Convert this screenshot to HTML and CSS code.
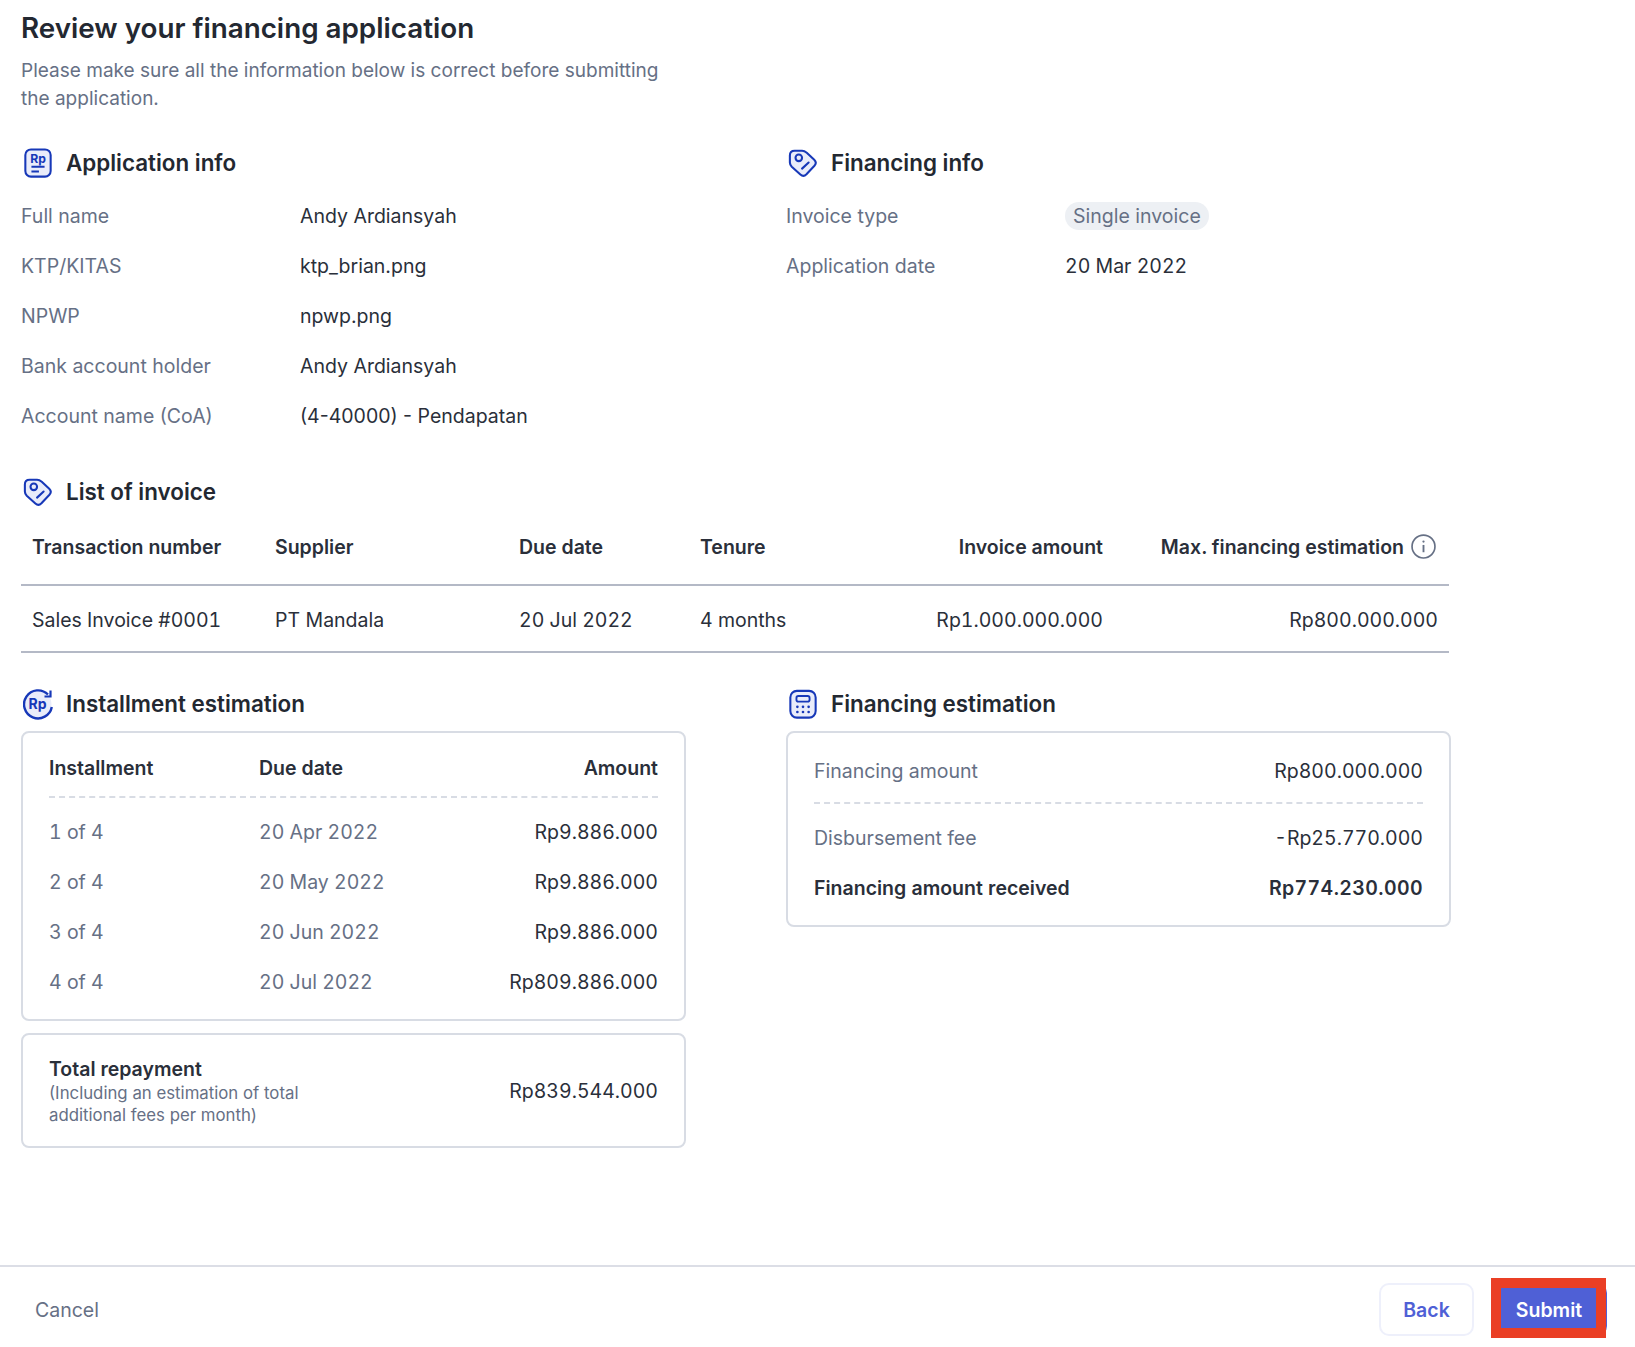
FILE: index.html
```html
<!DOCTYPE html>
<html lang="en">
<head>
    <meta charset="UTF-8">
    <meta name="viewport" content="width=device-width, initial-scale=1.0">
    <title>Review your financing application</title>
    <link rel="stylesheet" href="styles.css">
</head>
<body>

    <main class="content">
        <h1 class="title">Review your financing application</h1>
        <p class="subtitle">Please make sure all the information below is correct before submitting the application.</p>

        <div class="columns info-columns">
            <section>
                <h2 class="section-title">
                    <svg class="icon" viewBox="0 0 32 32">
                        <rect x="2.500" y="1.500" width="27" height="29" rx="6" fill="#e9ecfa" stroke="#1738b8" stroke-width="2.200"/>
                        <text x="16" y="15.500" text-anchor="middle" class="icon-text" font-size="13">Rp</text>
                        <path d="M9 20h14M9 25h8" fill="none" stroke="#1738b8" stroke-width="2"/>
                    </svg>
                    Application info
                </h2>
                <div class="info-row"><span class="info-label">Full name</span><span>Andy Ardiansyah</span></div>
                <div class="info-row"><span class="info-label">KTP/KITAS</span><span>ktp_brian.png</span></div>
                <div class="info-row"><span class="info-label">NPWP</span><span>npwp.png</span></div>
                <div class="info-row"><span class="info-label">Bank account holder</span><span>Andy Ardiansyah</span></div>
                <div class="info-row"><span class="info-label">Account name (CoA)</span><span>(4-40000) - Pendapatan</span></div>
            </section>
            <section>
                <h2 class="section-title">
                    <svg class="icon" viewBox="0 0 32 32">
                        <path d="M7 3h8c2 0 3.500.8 5 2l8 7.500c2 2 2 4.500.2 6.500l-8.500 9c-2 2-4.500 2-6.500.2L4 20c-1.500-1.500-2-3-2-4.500V8c0-3 2-5 5-5z" fill="#e9ecfa" stroke="#1738b8" stroke-width="2.200" stroke-linejoin="round"/>
                        <circle cx="11.500" cy="10.500" r="3.500" fill="none" stroke="#1738b8" stroke-width="2.200"/>
                        <path d="M15 22l7-6.500" fill="none" stroke="#1738b8" stroke-width="2.200" stroke-linecap="round"/>
                    </svg>
                    Financing info
                </h2>
                <div class="info-row"><span class="info-label">Invoice type</span><span class="badge">Single invoice</span></div>
                <div class="info-row"><span class="info-label">Application date</span><span class="num">20 Mar 2022</span></div>
            </section>
        </div>

        <h2 class="section-title list-title">
            <svg class="icon" viewBox="0 0 32 32">
                <path d="M7 3h8c2 0 3.500.8 5 2l8 7.500c2 2 2 4.500.2 6.500l-8.500 9c-2 2-4.500 2-6.500.2L4 20c-1.500-1.500-2-3-2-4.500V8c0-3 2-5 5-5z" fill="#e9ecfa" stroke="#1738b8" stroke-width="2.200" stroke-linejoin="round"/>
                <circle cx="11.500" cy="10.500" r="3.500" fill="none" stroke="#1738b8" stroke-width="2.200"/>
                <path d="M15 22l7-6.500" fill="none" stroke="#1738b8" stroke-width="2.200" stroke-linecap="round"/>
            </svg>
            List of invoice
        </h2>
        <table class="invoice-table">
            <thead>
                <tr>
                    <th class="col-number">Transaction number</th>
                    <th class="col-supplier">Supplier</th>
                    <th class="col-due">Due date</th>
                    <th>Tenure</th>
                    <th class="right">Invoice amount</th>
                    <th class="right col-max">
                        <span class="max-head">Max. financing estimation
                            <svg class="info-icon" viewBox="0 0 24 24">
                                <circle cx="12" cy="12" r="11" fill="none" stroke="#667085" stroke-width="1.600"/>
                                <path d="M12 10.500v7" stroke="#667085" stroke-width="1.800" fill="none"/>
                                <circle cx="12" cy="7.300" r="1.100" fill="#667085"/>
                            </svg>
                        </span>
                    </th>
                </tr>
            </thead>
            <tbody>
                <tr>
                    <td class="num">Sales Invoice #0001</td>
                    <td>PT Mandala</td>
                    <td class="num">20 Jul 2022</td>
                    <td class="num">4 months</td>
                    <td class="right num">Rp1.000.000.000</td>
                    <td class="right num">Rp800.000.000</td>
                </tr>
            </tbody>
        </table>

        <div class="columns estimation-columns">
            <section>
                <h2 class="section-title">
                    <svg class="icon" viewBox="1 1 30 30">
                        <circle cx="16" cy="16" r="13.500" fill="#e9ecfa"/>
                        <path d="M26 6.500A14 14 0 1 0 29.800 19" fill="none" stroke="#1738b8" stroke-width="2.400"/>
                        <path d="M28.500 2.500v6h-6" fill="none" stroke="#1738b8" stroke-width="2.200"/>
                        <text x="15.500" y="21" text-anchor="middle" class="icon-text" font-size="14">Rp</text>
                    </svg>
                    Installment estimation
                </h2>
                <div class="card installment-card">
                    <div class="installment-row installment-head">
                        <span>Installment</span><span>Due date</span><span class="right">Amount</span>
                    </div>
                    <div class="installment-row num"><span class="muted">1 of 4</span><span class="muted">20 Apr 2022</span><span class="right">Rp9.886.000</span></div>
                    <div class="installment-row num"><span class="muted">2 of 4</span><span class="muted">20 May 2022</span><span class="right">Rp9.886.000</span></div>
                    <div class="installment-row num"><span class="muted">3 of 4</span><span class="muted">20 Jun 2022</span><span class="right">Rp9.886.000</span></div>
                    <div class="installment-row num"><span class="muted">4 of 4</span><span class="muted">20 Jul 2022</span><span class="right">Rp809.886.000</span></div>
                </div>
                <div class="card total-card">
                    <div>
                        <div class="total-label">Total repayment</div>
                        <div class="total-note">(Including an estimation of total<br>additional fees per month)</div>
                    </div>
                    <span class="num">Rp839.544.000</span>
                </div>
            </section>
            <section>
                <h2 class="section-title">
                    <svg class="icon" viewBox="0 0 32 32">
                        <rect x="2.500" y="2" width="27" height="28.500" rx="7" fill="#e9ecfa" stroke="#1738b8" stroke-width="2.200"/>
                        <rect x="9" y="7.500" width="14" height="6" rx="2" fill="none" stroke="#1738b8" stroke-width="2"/>
                        <g fill="#1738b8">
                            <circle cx="10" cy="19" r="1.400"/><circle cx="16" cy="19" r="1.400"/><circle cx="22" cy="19" r="1.400"/>
                            <circle cx="10" cy="24.500" r="1.400"/><circle cx="16" cy="24.500" r="1.400"/><circle cx="22" cy="24.500" r="1.400"/>
                        </g>
                    </svg>
                    Financing estimation
                </h2>
                <div class="card financing-card">
                    <div class="financing-row financing-first num"><span class="muted">Financing amount</span><span>Rp800.000.000</span></div>
                    <div class="financing-row num"><span class="muted">Disbursement fee</span><span>-Rp25.770.000</span></div>
                    <div class="financing-row financing-total num"><span>Financing amount received</span><span class="total-amount">Rp774.230.000</span></div>
                </div>
            </section>
        </div>
    </main>

    <footer class="footer">
        <a class="cancel" href="#">Cancel</a>
        <div class="footer-buttons">
            <button class="btn btn-back">Back</button>
            <button class="btn btn-submit">Submit</button>
        </div>
    </footer>

</body>
</html>
```

FILE: styles.css
```css
* {
    box-sizing: border-box;
}

body {
    font-family: Inter, "Liberation Sans", sans-serif;
    font-size: 19.5px;
    line-height: 28px;
    color: #2a2f3a;
    background-color: #fff;
    margin: 0;
    height: 1347px;
    display: flex;
    flex-direction: column;
    overflow: hidden;
}

.num {
    font-variant-numeric: tabular-nums;
}

.content {
    flex: 1;
    padding: 9px 0 0 21px;
    width: 1452px;
}

.title {
    margin: 0;
    font-size: 27.8px;
    line-height: 38px;
    font-weight: 600;
    color: #232831;
}

.subtitle {
    margin: 10px 0 0;
    width: 650px;
    font-size: 19.05px;
    color: #667085;
}

.columns {
    display: grid;
    grid-template-columns: 665px 665px;
    column-gap: 100px;
}

.info-columns {
    margin-top: 32px;
}

.section-title {
    display: flex;
    align-items: center;
    gap: 13px;
    margin: 0;
    height: 36px;
    font-size: 22.4px;
    line-height: 32px;
    font-weight: 600;
    color: #232831;
}

.icon {
    width: 30px;
    height: 32px;
    margin-left: 2px;
    flex-shrink: 0;
}

.icon-text {
    font-family: Inter, "Liberation Sans", sans-serif;
    font-weight: 700;
    fill: #1738b8;
}

.info-row {
    display: flex;
    align-items: center;
    height: 50px;
}

.section-title + .info-row {
    margin-top: 10px;
}

.info-label {
    width: 279px;
    color: #667085;
}

.badge {
    background-color: #edf0f4;
    color: #667085;
    border-radius: 14px;
    padding: 0 8px;
    margin-left: 0;
}

.list-title {
    margin-top: 33px;
}

.invoice-table {
    width: 1428px;
    margin-top: 2px;
    border-collapse: collapse;
    table-layout: fixed;
}

.invoice-table th {
    height: 73px;
    padding: 0 11px 3px;
    font-weight: 600;
    text-align: left;
    color: #2a2f3a;
    border-bottom: 2px solid #b4b9c6;
}

.invoice-table th.col-max {
    padding-right: 13px;
}

.invoice-table td {
    height: 67px;
    padding: 2px 11px 0;
    border-bottom: 2px solid #b4b9c6;
}

.invoice-table .right,
.right {
    text-align: right;
}

.col-number {
    width: 243px;
}

.col-supplier {
    width: 244px;
}

.col-due {
    width: 181px;
}

.col-max {
    width: 335px;
}

.max-head {
    display: inline-flex;
    align-items: center;
    gap: 7px;
    white-space: nowrap;
}

.info-icon {
    width: 25px;
    height: 25px;
}

.estimation-columns {
    margin-top: 33px;
}

.estimation-columns .section-title {
    margin-bottom: 9px;
}

.card {
    border: 2px solid #d8dce4;
    border-radius: 8px;
    padding: 0 26px;
}

.installment-card {
    height: 290px;
    padding-top: 7px;
}

.installment-row {
    display: grid;
    grid-template-columns: 210px 1fr auto;
    align-items: center;
    height: 50px;
}

.installment-head {
    height: 58px;
    margin-bottom: 9px;
    font-weight: 600;
    border-bottom: 2px dashed #d8dce4;
}

.muted {
    color: #667085;
}

.total-card {
    height: 115px;
    margin-top: 12px;
    display: flex;
    justify-content: space-between;
    align-items: center;
}

.total-label {
    font-weight: 600;
    line-height: 26px;
}

.total-note {
    font-size: 16.8px;
    line-height: 22px;
    color: #667085;
}

.financing-card {
    height: 196px;
    padding-top: 13px;
}

.financing-row {
    display: flex;
    justify-content: space-between;
    align-items: center;
    height: 50px;
}

.financing-first {
    height: 58px;
    margin-bottom: 9px;
    padding-bottom: 6px;
    border-bottom: 2px dashed #d8dce4;
}

.financing-total {
    font-weight: 600;
}

.total-amount {
    letter-spacing: 0.4px;
}

.footer {
    height: 82px;
    border-top: 2px solid #dcdee6;
    display: flex;
    justify-content: space-between;
    align-items: center;
    padding: 5px 28px 0 35px;
}

.cancel {
    color: #667085;
    text-decoration: none;
}

.footer-buttons {
    display: flex;
    gap: 17px;
}

.btn {
    height: 53px;
    font-family: inherit;
    font-size: 19.5px;
    font-weight: 600;
    border-radius: 10px;
    cursor: pointer;
}

.btn-back {
    width: 95px;
    background-color: #fff;
    color: #4f60d6;
    border: 2px solid #eef0fb;
}

.btn-submit {
    position: relative;
    width: 116px;
    background-color: #4f60d6;
    color: #fff;
    border: none;
}

/* red highlight round the submit button */
.btn-submit::after {
    content: "";
    box-sizing: border-box;
    position: absolute;
    top: -5px;
    left: 0;
    width: 115px;
    height: 60px;
    border: 10px solid #ea3f25;
}
```
